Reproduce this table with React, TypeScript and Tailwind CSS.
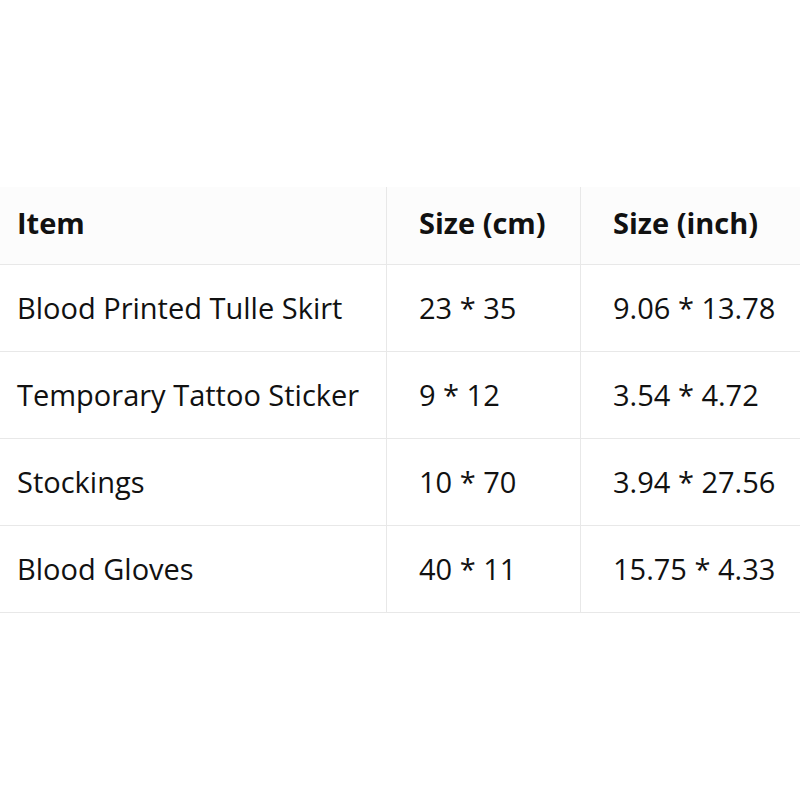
import React from "react";

const rows = [
  ["Blood Printed Tulle Skirt", "23 * 35", "9.06 * 13.78"],
  ["Temporary Tattoo Sticker", "9 * 12", "3.54 * 4.72"],
  ["Stockings", "10 * 70", "3.94 * 27.56"],
  ["Blood Gloves", "40 * 11", "15.75 * 4.33"],
];

export default function App() {
  return (
    <div className="w-[800px] h-[800px] bg-white pt-[187px] text-[#111]" style={{ fontFamily: '"Open Sans", "Noto Sans", sans-serif' }}>
      <div className="grid grid-cols-[387px_194px_219px] text-[29px]">
        <div className="h-[78px] flex items-center pl-[17px] pb-[6px] font-bold bg-[#fcfcfc] border-r border-b border-[#e8e8e8]">Item</div>
        <div className="h-[78px] flex items-center pl-[32px] pb-[6px] font-bold bg-[#fcfcfc] border-r border-b border-[#e8e8e8]">Size (cm)</div>
        <div className="h-[78px] flex items-center pl-[32px] pb-[6px] font-bold bg-[#fcfcfc] border-b border-[#e8e8e8]">Size (inch)</div>
        {rows.map((r, i) => (
          <React.Fragment key={i}>
            <div className="h-[87px] flex items-center pl-[17px] border-r border-b border-[#e8e8e8]">{r[0]}</div>
            <div className="h-[87px] flex items-center pl-[32px] border-r border-b border-[#e8e8e8]">{r[1]}</div>
            <div className="h-[87px] flex items-center pl-[32px] border-b border-[#e8e8e8]">{r[2]}</div>
          </React.Fragment>
        ))}
      </div>
    </div>
  );
}
